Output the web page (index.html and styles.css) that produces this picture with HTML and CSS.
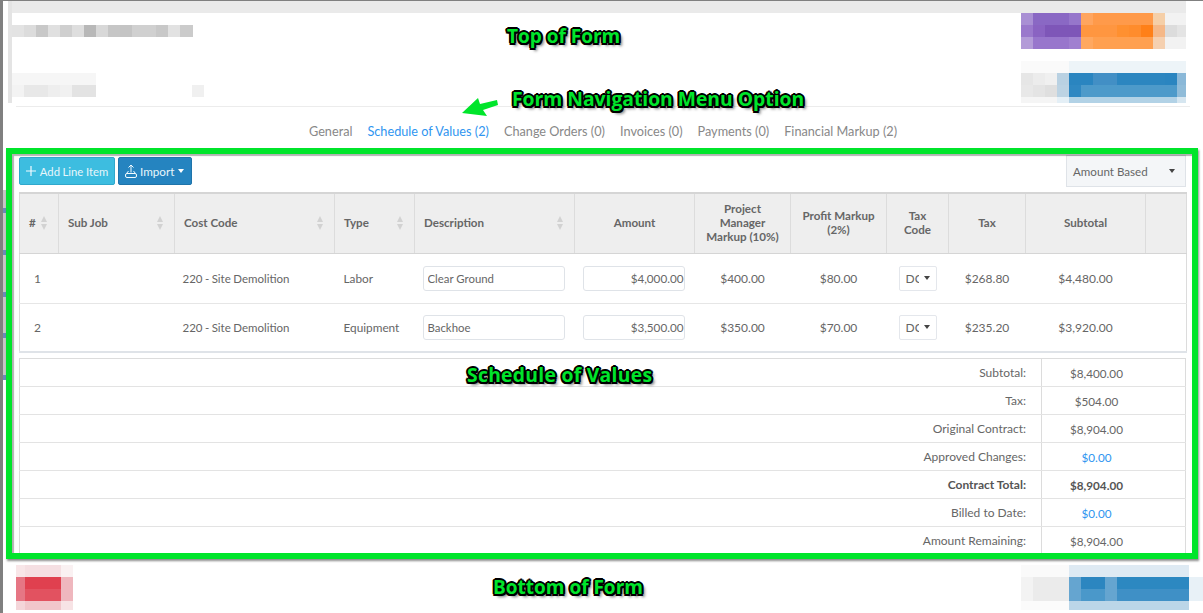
FILE: index.html
```html
<!DOCTYPE html>
<html lang="en">
<head>
<meta charset="utf-8">
<title>Schedule of Values</title>
<link rel="stylesheet" href="styles.css">
</head>
<body>
<div class="page">
  <header class="form-top">
    <div class="top-strip"></div>
    <div class="top-row">
      <svg class="blur-left" width="181" height="36" shape-rendering="crispEdges">
        <rect x="0" y="12" width="12" height="12" fill="#e3e3e3"/><rect x="12" y="12" width="12" height="12" fill="#dcdcdc"/><rect x="24" y="12" width="12" height="12" fill="#c8c8c8"/><rect x="36" y="12" width="12" height="12" fill="#e0e0e0"/><rect x="48" y="12" width="12" height="12" fill="#cfcfcf"/><rect x="60" y="12" width="12" height="12" fill="#dedede"/><rect x="72" y="12" width="12" height="12" fill="#b8b8b8"/><rect x="84" y="12" width="12" height="12" fill="#d8d8d8"/><rect x="96" y="12" width="12" height="12" fill="#c6c6c6"/><rect x="108" y="12" width="12" height="12" fill="#c4c4c4"/><rect x="120" y="12" width="12" height="12" fill="#d0d0d0"/><rect x="132" y="12" width="12" height="12" fill="#d0d0d0"/><rect x="144" y="12" width="12" height="12" fill="#c8c8c8"/><rect x="156" y="12" width="12" height="12" fill="#e2e2e2"/><rect x="168" y="12" width="13" height="12" fill="#cbcbcb"/>
      </svg>
      <svg class="blur-right" width="165" height="36" shape-rendering="crispEdges">
        <rect x="0" y="0" width="12" height="12" fill="#a98fd4"/><rect x="12" y="0" width="36" height="12" fill="#8a68c4"/><rect x="48" y="0" width="12" height="12" fill="#9676cb"/><rect x="60" y="0" width="12" height="12" fill="#ffa55f"/><rect x="72" y="0" width="60" height="12" fill="#ff9a4a"/><rect x="132" y="0" width="12" height="12" fill="#f5cfa8"/><rect x="144" y="0" width="21" height="12" fill="#f2f2f2"/>
        <rect x="0" y="12" width="12" height="12" fill="#9a78cc"/><rect x="12" y="12" width="12" height="12" fill="#8a63c2"/><rect x="24" y="12" width="36" height="12" fill="#7e56b8"/><rect x="60" y="12" width="36" height="12" fill="#ff9640"/><rect x="96" y="12" width="12" height="12" fill="#ff9030"/><rect x="108" y="12" width="12" height="12" fill="#ff8c2c"/><rect x="120" y="12" width="12" height="12" fill="#ff8018"/><rect x="132" y="12" width="12" height="12" fill="#f5b888"/><rect x="144" y="12" width="12" height="12" fill="#dcdcdc"/><rect x="156" y="12" width="9" height="12" fill="#e4e4e4"/>
        <rect x="0" y="24" width="12" height="12" fill="#b39bd8"/><rect x="12" y="24" width="36" height="12" fill="#9876cc"/><rect x="48" y="24" width="12" height="12" fill="#a080d0"/><rect x="60" y="24" width="12" height="12" fill="#ffa860"/><rect x="72" y="24" width="60" height="12" fill="#ffa050"/><rect x="132" y="24" width="12" height="12" fill="#f5d0b0"/><rect x="144" y="24" width="21" height="12" fill="#f2f2f2"/>
      </svg>
    </div>
    <div class="top-row second">
      <svg class="blur-left" width="205" height="42" shape-rendering="crispEdges">
        <rect x="0" y="12" width="84" height="12" fill="#f6f6f6"/><rect x="0" y="24" width="12" height="12" fill="#f3f3f3"/><rect x="12" y="24" width="24" height="12" fill="#e8e8e8"/><rect x="36" y="24" width="12" height="12" fill="#eeeeee"/><rect x="48" y="24" width="12" height="12" fill="#f1f1f1"/><rect x="60" y="24" width="24" height="12" fill="#e3e3e3"/><rect x="180" y="24" width="12" height="12" fill="#f0f0f0"/>
      </svg>
      <svg class="blur-right" width="165" height="42" shape-rendering="crispEdges">
        <rect x="0" y="0" width="48" height="12" fill="#fafafa"/><rect x="48" y="0" width="117" height="12" fill="#edf4f8"/>
        <rect x="0" y="12" width="12" height="12" fill="#e6e6e6"/><rect x="12" y="12" width="12" height="12" fill="#ececec"/><rect x="24" y="12" width="12" height="12" fill="#f0f0f0"/><rect x="36" y="12" width="12" height="12" fill="#b9d1e2"/><rect x="48" y="12" width="24" height="12" fill="#2a85c0"/><rect x="72" y="12" width="24" height="12" fill="#428fc5"/><rect x="96" y="12" width="48" height="12" fill="#2c86c0"/><rect x="144" y="12" width="12" height="12" fill="#2a85c0"/><rect x="156" y="12" width="9" height="12" fill="#8ab8d8"/>
        <rect x="0" y="24" width="12" height="12" fill="#e8e8e8"/><rect x="12" y="24" width="12" height="12" fill="#e4e4e4"/><rect x="24" y="24" width="12" height="12" fill="#dfdfdf"/><rect x="36" y="24" width="12" height="12" fill="#bcd3e3"/><rect x="48" y="24" width="12" height="12" fill="#2f88c2"/><rect x="60" y="24" width="96" height="12" fill="#4d9aca"/><rect x="156" y="24" width="9" height="12" fill="#90bcd9"/>
        <rect x="0" y="36" width="36" height="6" fill="#f5f5f5"/><rect x="36" y="36" width="12" height="6" fill="#e4eff6"/><rect x="48" y="36" width="108" height="6" fill="#b2d2e6"/><rect x="156" y="36" width="9" height="6" fill="#d6e6f0"/>
      </svg>
    </div>
  </header>

  <nav class="form-nav">
    <a class="nav-item">General</a>
    <a class="nav-item active">Schedule of Values (2)</a>
    <a class="nav-item">Change Orders (0)</a>
    <a class="nav-item">Invoices (0)</a>
    <a class="nav-item">Payments (0)</a>
    <a class="nav-item">Financial Markup (2)</a>
  </nav>

  <main class="content">
    <div class="toolbar">
      <button class="btn btn-add">
        <svg width="10" height="10" viewBox="0 0 10 10" stroke="#f2fbff" stroke-width="1.200"><path d="M5 0v10M0 5h10"/></svg>
        <span class="btn-text">Add Line Item</span>
      </button>
      <button class="btn btn-import">
        <svg width="12" height="14" viewBox="0 0 12 14" fill="none" stroke="#f2fbff" stroke-width="1"><path d="M6 8.500V1M3.500 3.500 6 1l2.500 2.500"/><path d="M3.500 7 1.500 9.500M8.500 7l2 2.500"/><rect x=".5" y="9.500" width="11" height="4" rx="1.500"/></svg>
        <span class="btn-label">Import</span><span class="caret"></span>
      </button>
      <div class="select-box"><span class="select-text">Amount Based</span><span class="caret dark"></span></div>
    </div>

    <table class="items">
      <colgroup>
        <col class="c-num"><col class="c-job"><col class="c-code"><col class="c-type"><col class="c-desc"><col class="c-amt"><col class="c-pm"><col class="c-pf"><col class="c-tc"><col class="c-tax"><col class="c-sub"><col class="c-end">
      </colgroup>
      <thead>
        <tr>
          <th class="sort">#<span class="sorter"></span></th>
          <th class="sort">Sub Job<span class="sorter"></span></th>
          <th class="sort">Cost Code<span class="sorter"></span></th>
          <th class="sort">Type<span class="sorter"></span></th>
          <th class="sort">Description<span class="sorter"></span></th>
          <th>Amount</th>
          <th>Project Manager Markup (10%)</th>
          <th>Profit Markup (2%)</th>
          <th>Tax Code</th>
          <th>Tax</th>
          <th>Subtotal</th>
          <th></th>
        </tr>
      </thead>
      <tbody>
        <tr>
          <td class="num">1</td><td></td><td class="code">220 - Site Demolition</td><td class="type">Labor</td>
          <td class="fld"><input class="field" value="Clear Ground"></td>
          <td class="fld"><input class="field right" value="$4,000.00"></td>
          <td class="mid">$400.00</td><td class="mid">$80.00</td>
          <td class="mid"><span class="mini-select"><span class="mini-text">DC</span><span class="caret dark"></span></span></td>
          <td class="mid">$268.80</td><td class="mid">$4,480.00</td><td></td>
        </tr>
        <tr>
          <td class="num">2</td><td></td><td class="code">220 - Site Demolition</td><td class="type">Equipment</td>
          <td class="fld"><input class="field" value="Backhoe"></td>
          <td class="fld"><input class="field right" value="$3,500.00"></td>
          <td class="mid">$350.00</td><td class="mid">$70.00</td>
          <td class="mid"><span class="mini-select"><span class="mini-text">DC</span><span class="caret dark"></span></span></td>
          <td class="mid">$235.20</td><td class="mid">$3,920.00</td><td></td>
        </tr>
      </tbody>
    </table>

    <table class="totals">
      <tr><td class="lbl">Subtotal:</td><td class="val">$8,400.00</td></tr>
      <tr><td class="lbl">Tax:</td><td class="val">$504.00</td></tr>
      <tr><td class="lbl">Original Contract:</td><td class="val">$8,904.00</td></tr>
      <tr><td class="lbl">Approved Changes:</td><td class="val link">$0.00</td></tr>
      <tr class="strong"><td class="lbl">Contract Total:</td><td class="val">$8,904.00</td></tr>
      <tr><td class="lbl">Billed to Date:</td><td class="val link">$0.00</td></tr>
      <tr><td class="lbl">Amount Remaining:</td><td class="val">$8,904.00</td></tr>
    </table>
  </main>

  <footer class="form-bottom">
    <svg width="57" height="45" shape-rendering="crispEdges">
      <rect x="0" y="0" width="9" height="12" fill="#f8e6e8"/><rect x="9" y="0" width="36" height="12" fill="#f5dfe2"/><rect x="45" y="0" width="12" height="12" fill="#faf1f2"/>
      <rect x="0" y="12" width="9" height="24" fill="#e67684"/><rect x="9" y="12" width="36" height="12" fill="#e0404f"/><rect x="9" y="24" width="36" height="12" fill="#e25260"/><rect x="45" y="12" width="12" height="24" fill="#efb7be"/>
      <rect x="0" y="36" width="9" height="9" fill="#f4d5d9"/><rect x="9" y="36" width="36" height="9" fill="#f1c6cb"/><rect x="45" y="36" width="12" height="9" fill="#f7e3e5"/>
    </svg>
    <svg width="182" height="45" shape-rendering="crispEdges">
      <rect x="0" y="0" width="48" height="12" fill="#fafafa"/><rect x="48" y="0" width="120" height="12" fill="#deeaf3"/>
      <rect x="0" y="12" width="12" height="24" fill="#f3f3f3"/><rect x="12" y="12" width="36" height="24" fill="#ebebeb"/><rect x="48" y="12" width="12" height="24" fill="#65a5d0"/><rect x="60" y="12" width="24" height="12" fill="#2c86c0"/><rect x="60" y="24" width="24" height="12" fill="#4a98ca"/><rect x="84" y="12" width="12" height="24" fill="#65a5d0"/><rect x="96" y="12" width="72" height="12" fill="#2c88c1"/><rect x="96" y="24" width="72" height="12" fill="#3f90c6"/><rect x="168" y="12" width="14" height="24" fill="#e8f1f7"/>
      <rect x="0" y="36" width="48" height="9" fill="#fbfbfb"/><rect x="48" y="36" width="120" height="9" fill="#bbd6e8"/>
    </svg>
  </footer>

  <div class="edge-band"><i></i><i></i><i></i><i></i><i></i></div>
  <div class="top-band"></div>
  <div class="green-frame"></div>
  <svg class="arrow" width="40" height="20" viewBox="0 0 40 20"><polygon points="1,16 17,1 19,7 36,3 37,8 22,13 26,19" fill="#00e52b"/></svg>
  <span class="note note-top">Top of Form</span>
  <span class="note note-nav">Form Navigation Menu Option</span>
  <span class="note note-sov">Schedule of Values</span>
  <span class="note note-bottom">Bottom of Form</span>
</div>
</body>
</html>
```
FILE: styles.css
```css
* { box-sizing: border-box; }
html, body { margin: 0; padding: 0; }
body { background: #fff; font-family: "Lato", sans-serif; font-size: 12px; color: #666; }
.page { position: relative; width: 1203px; height: 613px; overflow: hidden; background: #fff; border-left: 3px solid #808080; border-top: 1px solid #808080; padding-left: 5px; }

.form-top { width: 1178px; }
.top-strip { height: 12px; background: #eaeaea; }
.top-row { display: flex; justify-content: space-between; align-items: flex-start; height: 36px; padding-left: 4px; }
.top-row .blur-right { margin-left: auto; }
.top-row svg { display: block; }
.top-row.second { height: 42px; margin-top: 12px; }

.form-nav { display: flex; justify-content: center; gap: 15px; margin-top: 3px; margin-left: 8px; padding-top: 14px; height: 46px; width: 1174px; border-top: 1px solid #ececec; font-size: 12.700px; line-height: 20px; color: #888; }
.nav-item.active { color: #2f95f0; }

.content { width: 1167px; margin-left: 11px; margin-top: 3px; }
.toolbar { display: flex; align-items: flex-start; gap: 3px; height: 37px; }
.btn { height: 28px; margin-top: 2px; border-radius: 2px; font-family: inherit; font-size: 12px; color: #e8f6fb; display: flex; align-items: center; padding: 0; }
.btn-add { width: 96px; background: #3dbde0; border: 1px solid #30a8cc; gap: 4px; justify-content: center; }
.btn-text { font-size: 11.300px; word-spacing: -.3px; }
.btn-import { width: 74px; background: #2584c0; border: 1px solid #1f74aa; gap: 3px; padding-left: 6px; }
.btn-label { font-size: 11.700px; }
.caret { display: inline-block; width: 0; height: 0; border-left: 3.500px solid transparent; border-right: 3.500px solid transparent; border-top: 4px solid #fff; margin-left: 1px; }
.caret.dark { border-top-color: #444; }
.select-box { margin-left: auto; width: 120px; height: 32px; background: #f4f6f8; border: 1px solid #dfe3e8; color: #666; display: flex; align-items: center; justify-content: space-between; padding: 0 10px 0 6px; }
.select-text { font-size: 11.600px; }

.items { width: 1167px; table-layout: fixed; border-collapse: collapse; border: 1px solid #dcdcdc; border-top: 2px solid #d5d5d5; }
.c-num { width: 39px; } .c-job { width: 116px; } .c-code { width: 160px; } .c-type { width: 80px; } .c-desc { width: 160px; } .c-amt { width: 120px; } .c-pm { width: 96px; } .c-pf { width: 96px; } .c-tc { width: 62px; } .c-tax { width: 77px; } .c-sub { width: 120px; } .c-end { width: 41px; }
.items th { height: 60px; background: #eeeeee; border-right: 1px solid #dcdcdc; border-bottom: 1px solid #d5d5d5; font-size: 11.600px; font-weight: 700; line-height: 14px; color: #666; text-align: center; padding: 0 8px; }
.items th.sort { text-align: left; position: relative; padding-left: 9px; }
.items th:last-child { border-right: 0; }
.sorter { position: absolute; right: 10px; top: 50%; width: 7px; height: 14px; margin-top: -7px; }
.sorter::before, .sorter::after { content: ""; position: absolute; left: 0; width: 0; height: 0; border-left: 3.500px solid transparent; border-right: 3.500px solid transparent; }
.sorter::before { top: 0; border-bottom: 6px solid #d2d2d2; }
.sorter::after { bottom: 0; border-top: 6px solid #d2d2d2; }
.items th:first-child .sorter { right: auto; left: 21px; }
.items td { height: 50px; border-bottom: 1px solid #e6e6e6; padding: 0 8px; color: #666; white-space: nowrap; overflow: hidden; }
.items tbody tr:last-child td { height: 49px; border-bottom: 2px solid #dfe3e8; }
.items td.num { padding-left: 14px; }
.items td.code { font-size: 11.500px; word-spacing: -.5px; }
.items td.type { padding-left: 9px; font-size: 11.800px; }
.items td.mid { text-align: center; }
.items td.fld { padding: 0 10px 0 8px; }
.field { width: 100%; height: 25px; border: 1px solid #dfe3e8; border-radius: 3px; background: #fff; font-family: inherit; font-size: 11.400px; color: #666; padding: 0 3px 0 4px; display: block; }
.field.right { text-align: right; padding-right: 0; font-size: 11.700px; }
.mini-select { display: inline-flex; align-items: center; width: 38px; height: 25px; border: 1px solid #e4e7ec; border-radius: 2px; padding-left: 6px; overflow: hidden; background: #fff; }
.mini-text { display: inline-block; width: 13px; overflow: hidden; }
.mini-select .caret { margin-left: 5px; border-left-width: 3px; border-right-width: 3px; }

.totals { width: 1167px; margin-top: 5px; table-layout: fixed; border-collapse: collapse; border: 1px solid #dcdcdc; }
.totals td { height: 28px; border-bottom: 1px solid #e3e3e3; }
.totals .lbl { text-align: right; padding-right: 15px; }
.totals .val { width: 144px; border-left: 1px solid #dcdcdc; text-align: center; padding-right: 35px; font-size: 11.700px; }
.totals .link { color: #2f95f0; }
.totals .strong td { font-weight: 700; color: #555; }

.form-bottom { position: absolute; left: 13px; top: 564px; width: 1187px; display: flex; justify-content: space-between; background: #fff; }
.form-bottom svg { display: block; }

.edge-band { position: absolute; left: 0; top: 189px; width: 3px; height: 190px; background: #c6c6c6; display: flex; flex-direction: column; justify-content: space-between; padding: 18px 0 0; }
.edge-band i { display: block; height: 5px; background: #6d8ab5; }
.top-band { position: absolute; left: 5px; top: 0; width: 4px; height: 102px; background: #e4e4e4; }
.green-frame { position: absolute; left: 3px; top: 147px; width: 1192px; height: 411px; border: 6px solid #00e52b; box-shadow: 1px 2px 2px rgba(0,0,0,.45), inset 2px 2px 1px rgba(0,0,0,.3); }
.arrow { position: absolute; left: 458px; top: 96px; }
.note { position: absolute; font-family: "Open Sans", sans-serif; font-weight: 700; font-size: 19.300px; line-height: 24px; color: #00e52b; white-space: nowrap; text-shadow: -1.500px -1.500px 0 #000, 1.500px -1.500px 0 #000, -1.500px 1.500px 0 #000, 1.500px 1.500px 0 #000, 0 -2px 0 #000, 0 2px 0 #000, -2px 0 0 #000, 2px 0 0 #000, 3px 3px 3px rgba(0,0,0,.55); }
.note-top { left: 504px; top: 23px; font-size: 19px; }
.note-nav { left: 509px; top: 86px; }
.note-sov { left: 464px; top: 362px; letter-spacing: .3px; }
.note-bottom { left: 490px; top: 574px; font-size: 19px; }
```
